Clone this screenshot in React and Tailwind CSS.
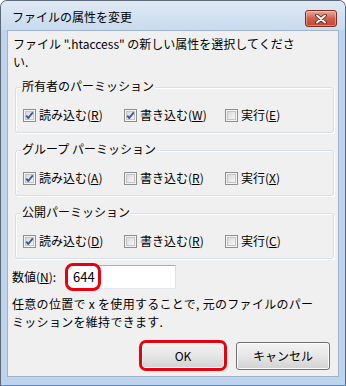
import React from "react";

const FONT = "font-['Noto_Sans_CJK_JP','Noto_Sans',sans-serif]";

function Check({ checked }) {
  return (
    <svg width="13" height="13" viewBox="0 0 13 13" className="shrink-0">
      <defs>
        <linearGradient id="cbg" x1="0" y1="0" x2="1" y2="1">
          <stop offset="0" stopColor="#d9d9d9" />
          <stop offset="1" stopColor="#f8f8f8" />
        </linearGradient>
      </defs>
      <rect x="0.5" y="0.5" width="12" height="12" fill="#f4f4f4" stroke="#8e8f8f" />
      <rect x="2.5" y="2.5" width="8" height="8" fill="url(#cbg)" stroke="#c4c4c4" />
      {checked && (
        <path d="M3.2 6.6 L5.3 9 L9.8 3.4" fill="none" stroke="#3d5a98" strokeWidth="1.9" strokeLinejoin="round" />
      )}
    </svg>
  );
}

function Label({ text, k }) {
  return (
    <span>
      {text}(<span className="underline underline-offset-[1px]">{k}</span>)
    </span>
  );
}

function Item({ checked, text, k }) {
  return (
    <div className="w-[101px] flex items-center gap-[3px]">
      <Check checked={checked} />
      <Label text={text} k={k} />
    </div>
  );
}

function Group({ title, items }) {
  return (
    <div className="relative ml-[7px] mr-[4px] h-[46px] border border-[#d5dfe5] rounded-[3px] shadow-[inset_1px_1px_0_#ffffff,1px_1px_0_#ffffff]">
      <span className="absolute -top-[11px] left-[5px] px-[1px] bg-[#f0f0f0] leading-[18px]">{title}</span>
      <div className="flex pt-[18px] pl-[7px] leading-[18px]">
        {items.map((it, i) => (
          <Item key={i} {...it} />
        ))}
      </div>
    </div>
  );
}

export default function App() {
  return (
    <div className={`${FONT} w-[346px] h-[386px] flex flex-col border border-[#5b6877] border-b-[#3f9fc6] rounded-t-[7px] bg-[#bed4ec] text-[12px] text-black overflow-hidden`}>
      {/* Title bar */}
      <div className="h-[29px] flex justify-between bg-gradient-to-b from-[#e0e9f4] to-[#c8dbef]">
        <div className="pl-[11px] pt-[7px] leading-[18px] text-[12px] text-black">ファイルの属性を変更</div>
        <div className="mt-[9px] mr-[8px] w-[32px] h-[17px] rounded-[3px] border border-[#7c2c20] bg-gradient-to-b from-[#e9a999] via-[#d0604c] to-[#c2452f] flex items-center justify-center shadow-[inset_0_0_0_1px_rgba(255,255,255,0.35)]">
          <svg width="12" height="10" viewBox="0 0 12 10">
            <path d="M2 1.5 L10 8.5 M10 1.5 L2 8.5" stroke="#5a1d14" strokeWidth="3.6" strokeLinecap="round" />
            <path d="M2 1.5 L10 8.5 M10 1.5 L2 8.5" stroke="#ffffff" strokeWidth="2" strokeLinecap="round" />
          </svg>
        </div>
      </div>

      {/* Content */}
      <div className="mx-[6px] h-[347px] border border-[#9fb3cb] bg-[#f0f0f0] flex flex-col">
        <p className="pt-[4px] pl-[5px] leading-[18px]">
          ファイル ".htaccess" の新しい属性を選択してくださ
          <br />
          い.
        </p>

        <div className="mt-[16px]">
          <Group
            title="所有者のパーミッション"
            items={[
              { checked: true, text: "読み込む", k: "R" },
              { checked: true, text: "書き込む", k: "W" },
              { checked: false, text: "実行", k: "E" },
            ]}
          />
        </div>
        <div className="mt-[17px]">
          <Group
            title="グループ パーミッション"
            items={[
              { checked: true, text: "読み込む", k: "A" },
              { checked: false, text: "書き込む", k: "R" },
              { checked: false, text: "実行", k: "X" },
            ]}
          />
        </div>
        <div className="mt-[17px]">
          <Group
            title="公開パーミッション"
            items={[
              { checked: true, text: "読み込む", k: "D" },
              { checked: false, text: "書き込む", k: "R" },
              { checked: false, text: "実行", k: "C" },
            ]}
          />
        </div>

        <div className="mt-[6px] pl-[4px] flex items-center gap-[4px] leading-[18px]">
          <span className="w-[51px]">
            数値(<span className="underline underline-offset-[1px]">N</span>):
          </span>
          <div className="relative w-[109px] h-[24px] bg-white border border-[#abadb3] border-b-[#e3e9ef] border-r-[#dbdfe6] flex items-center pl-[5px] text-[13px]">
            644
            <div className="absolute -left-[3px] -top-[3px] w-[36px] h-[28px] border-[3px] border-[#e8000f] rounded-[8px]" />
          </div>
        </div>

        <p className="mt-[6px] pl-[4px] leading-[18px] tracking-[0.3px]">
          任意の位置で x を使用することで, 元のファイルのパー
          <br />
          ミッションを維持できます.
        </p>

        <div className="mt-[9px] flex justify-end items-center gap-[9px] pr-[8px]">
          <div className="relative w-[88px] h-[31px] p-[2px]">
            <div className="w-full h-full rounded-[3px] border border-[#707070] bg-gradient-to-b from-[#f3f3f3] via-[#e6e6e6] to-[#d2d2d2] shadow-[inset_0_0_0_1px_#fcfcfc] flex items-center justify-center text-[12px]">
              OK
            </div>
            <div className="absolute inset-0 border-[3px] border-[#e8000f] rounded-[7px]" />
          </div>
          <div className="w-[94px] h-[28px] rounded-[3px] border border-[#707070] bg-gradient-to-b from-[#f3f3f3] via-[#e6e6e6] to-[#d2d2d2] shadow-[inset_0_0_0_1px_#fcfcfc] flex items-center justify-center text-[12px]">
            キャンセル
          </div>
        </div>
      </div>
    </div>
  );
}
